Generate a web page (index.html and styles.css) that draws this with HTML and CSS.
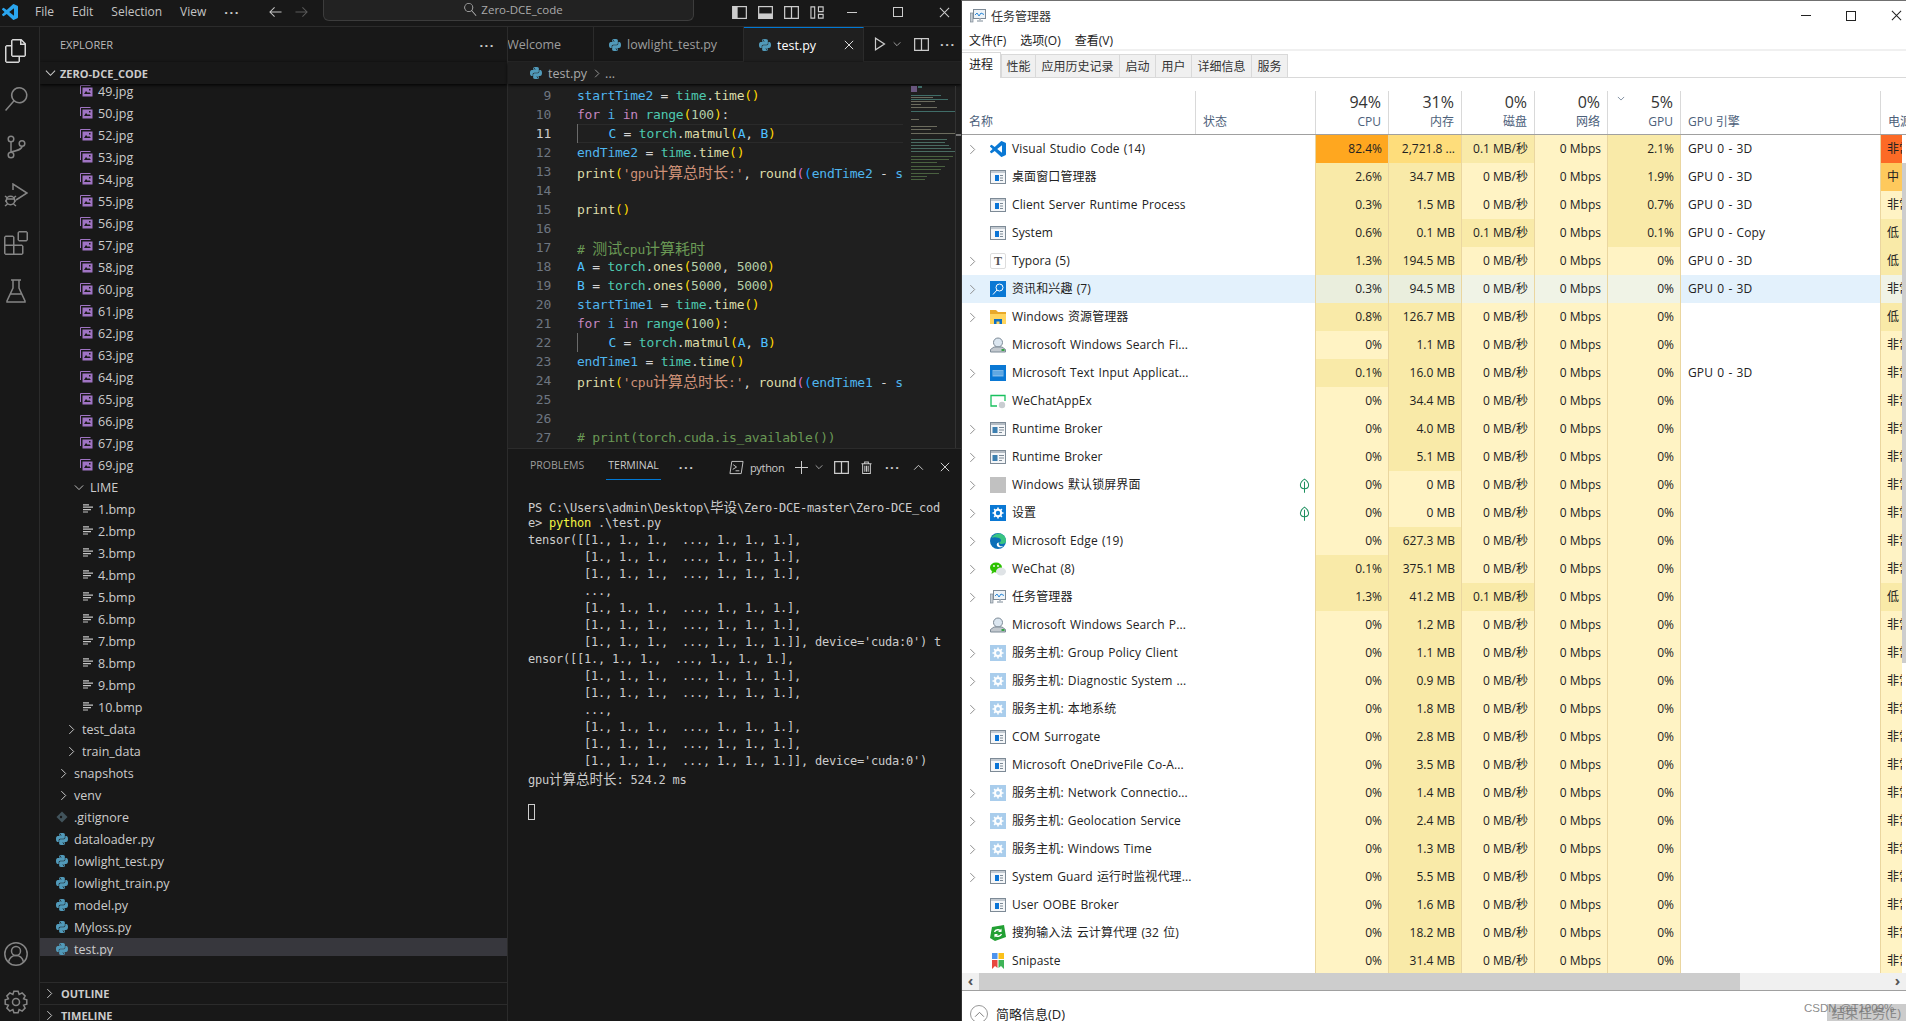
FILE: index.html
```html
<!DOCTYPE html>
<html lang="zh-CN">
<head>
    <meta charset="UTF-8">
    <title>Zero-DCE_code</title>
    <link rel="stylesheet" href="styles.css">
</head>
<body>
    <svg class="sprite" width="0" height="0">
        <symbol id="i-vscode" viewBox="0 0 24 24"><path fill="currentColor" d="M23.15 2.587L18.21.21a1.494 1.494 0 0 0-1.705.29l-9.46 8.63-4.12-3.128a.999.999 0 0 0-1.276.057L.327 7.261A1 1 0 0 0 .326 8.74L3.899 12 .326 15.26a1 1 0 0 0 .001 1.479L1.65 17.94a.999.999 0 0 0 1.276.057l4.12-3.128 9.46 8.63a1.492 1.492 0 0 0 1.704.29l4.942-2.377A1.5 1.5 0 0 0 24 20.06V3.939a1.5 1.5 0 0 0-.85-1.352zm-5.146 14.861L10.826 12l7.178-5.448v10.896z"/></symbol>
        <symbol id="i-python" viewBox="0 0 24 24"><path fill="#519aba" fill-rule="evenodd" d="M11.9 0C5.8 0 6.2 2.6 6.2 2.6v2.7H12v.8H3.9S0 5.7 0 11.9s3.4 6 3.4 6h2v-2.9s-.1-3.4 3.4-3.4h5.7s3.2.1 3.2-3.1V3.2S18.8 0 11.9 0zM8.7 1.9a1 1 0 1 1 0 2.1 1 1 0 0 1 0-2.1zM12.1 24c6.1 0 5.7-2.6 5.7-2.6v-2.7H12v-.8h8.1s3.9.4 3.9-5.8-3.4-6-3.4-6h-2v2.9s.1 3.4-3.4 3.4H9.5s-3.2-.1-3.2 3.1v5.3S5.2 24 12.1 24zm3.2-1.9a1 1 0 1 1 0-2.1 1 1 0 0 1 0 2.1z"/></symbol>
        <symbol id="i-image" viewBox="0 0 13 12"><path fill="none" stroke="#a074c4" d="M.5 9V.5h10"/><rect x="2.5" y="2.5" width="10" height="9" fill="#a074c4"/><path fill="#1a1a1a" d="M4 9l2-3 2 2 1-1 2 2zM9 4h1.5v1.5H9z"/></symbol>
        <symbol id="i-bmp" viewBox="0 0 10 10"><path stroke="#c5c5c5" stroke-width="1.2" d="M0 .8h6M0 3.2h10M0 5.6h8M0 8h5"/></symbol>
        <symbol id="i-git" viewBox="0 0 12 12"><path fill="#41535b" d="M6 .5L11.5 6 6 11.5.5 6z"/><circle cx="5" cy="6" r="1.2" fill="#181818"/></symbol>
        <symbol id="i-chev-r" viewBox="0 0 8 12"><path fill="none" stroke="currentColor" stroke-width="1.1" d="M1.5 1l5 5-5 5"/></symbol>
        <symbol id="i-chev-d" viewBox="0 0 12 8"><path fill="none" stroke="currentColor" stroke-width="1.1" d="M1 1.5l5 5 5-5"/></symbol>
        <symbol id="i-arrow" viewBox="0 0 14 12"><path fill="none" stroke="currentColor" stroke-width="1.1" d="M13.5 6H1M6 1L1 6l5 5"/></symbol>
        <symbol id="i-files" viewBox="0 0 24 24"><path fill="currentColor" d="M17.5 0h-9L7 1.5V6H2.5L1 7.5v15.07L2.5 24h12.07L16 22.57V18h4.7l1.3-1.43V4.5L17.5 0zm0 2.12l2.38 2.38H17.5V2.12zm-3 20.38h-12v-15H7v9.07L8.5 18h6v4.5zm6-6h-12v-15H16V6h4.5v10.5z"/></symbol>
        <symbol id="i-search" viewBox="0 0 24 24"><path fill="currentColor" d="M15.25 0a8.25 8.25 0 0 0-6.18 13.72L1 22.88l1.12 1 8.05-9.12A8.251 8.251 0 1 0 15.25.01V0zm0 15a6.75 6.75 0 1 1 0-13.5 6.75 6.75 0 0 1 0 13.5z"/></symbol>
        <symbol id="i-scm" viewBox="0 0 24 24"><g fill="none" stroke="currentColor" stroke-width="1.5"><circle cx="7" cy="4" r="2.8"/><circle cx="7" cy="20" r="2.8"/><circle cx="18" cy="8.5" r="2.8"/><path d="M7 7v10M18 11.3c0 3-4 4.2-11 5.7"/></g></symbol>
        <symbol id="i-debug" viewBox="0 0 24 24"><g fill="none" stroke="currentColor" stroke-width="1.5"><path d="M9 7V1l14 9-11 7"/><circle cx="6.5" cy="17.5" r="4.2"/><path d="M1 13l2.5 2M1 18h1.5M1 23l2.5-2M12 13l-2.5 2M12 18h-1.5M12 23l-2.5-2M3 16h7"/></g></symbol>
        <symbol id="i-ext" viewBox="0 0 24 24"><path fill="currentColor" d="M13.5 1.5L15 0h7.5L24 1.5V9l-1.5 1.5H15L13.5 9V1.5zm1.5 0V9h7.5V1.5H15zM0 15V6l1.5-1.5H9L10.5 6v7.5H18l1.5 1.5v7.5L18 24H1.5L0 22.5V15zm9-1.5V6H1.5v7.5H9zM9 15H1.5v7.5H9V15zm1.5 7.5H18V15h-7.5v7.5z"/></symbol>
        <symbol id="i-flask" viewBox="0 0 24 24"><path fill="none" stroke="currentColor" stroke-width="1.5" d="M7 1h10M9 1v8L3 22v1h18v-1L15 9V1M6.5 15h11"/></symbol>
        <symbol id="i-account" viewBox="0 0 24 24"><g fill="none" stroke="currentColor" stroke-width="1.5"><circle cx="12" cy="12" r="11.2"/><circle cx="12" cy="9" r="4.5"/><path d="M4.5 20c1-4 4-6.5 7.5-6.5s6.5 2.5 7.5 6.5"/></g></symbol>
        <symbol id="i-gear" viewBox="0 0 24 24"><g fill="none" stroke="currentColor" stroke-width="1.5"><polygon points="22.8,9.9 22.8,14.1 19.58,15.14 21.12,18.15 18.15,21.12 15.14,19.58 14.1,22.8 9.9,22.8 8.86,19.58 5.85,21.12 2.88,18.15 4.42,15.14 1.2,14.1 1.2,9.9 4.42,8.86 2.88,5.85 5.85,2.88 8.86,4.42 9.9,1.2 14.1,1.2 15.14,4.42 18.15,2.88 21.12,5.85 19.58,8.86"/><circle cx="12" cy="12" r="3.5"/></g></symbol>
        <symbol id="i-panel-left" viewBox="0 0 16 16"><rect x=".7" y="1.7" width="14.6" height="12.6" fill="none" stroke="currentColor" stroke-width="1.3"/><rect x="1" y="2" width="5" height="12" fill="currentColor"/></symbol>
        <symbol id="i-panel-bottom" viewBox="0 0 16 16"><rect x=".7" y="1.7" width="14.6" height="12.6" fill="none" stroke="currentColor" stroke-width="1.3"/><rect x="1" y="9" width="14" height="5" fill="currentColor"/></symbol>
        <symbol id="i-split" viewBox="0 0 16 16"><path fill="none" stroke="currentColor" stroke-width="1.3" d="M.7 1.7h14.6v12.6H.7zM8 1.7v12.6"/></symbol>
        <symbol id="i-layout" viewBox="0 0 16 16"><path fill="none" stroke="currentColor" stroke-width="1.2" d="M1 2h4v12H1zM9 2h5v5H9zM9 10h5v4H9z"/></symbol>
        <symbol id="i-close" viewBox="0 0 12 12"><path fill="none" stroke="currentColor" stroke-width="1.1" d="M1 1l10 10M11 1L1 11"/></symbol>
        <symbol id="i-run" viewBox="0 0 12 14"><path fill="none" stroke="currentColor" stroke-width="1.2" d="M1.5 1.2v11.6L10.5 7z"/></symbol>
        <symbol id="i-terminal" viewBox="0 0 16 16"><path fill="none" stroke="currentColor" d="M3 1.5h12L13 14.5H1zM4.5 5L8 7.5 4 10M7 11.5h4"/></symbol>
        <symbol id="i-trash" viewBox="0 0 12 14"><path fill="none" stroke="currentColor" stroke-width="1.1" d="M.5 3h11M4 3V1h4v2M1.8 3v10.5h8.4V3M4.2 5v6.5M6 5v6.5M7.8 5v6.5"/></symbol>
        <symbol id="p-app" viewBox="0 0 16 16"><rect x=".5" y="1.5" width="15" height="13" fill="#f4f6f8" stroke="#7d8a96"/><rect x="1" y="2" width="14" height="2" fill="#c3cad1"/><rect x="5" y="6" width="4" height="6" fill="#0a74d6"/><path stroke="#7d8a96" d="M10 6.5h3M10 9h3M10 11.5h3"/></symbol>
        <symbol id="p-broker" viewBox="0 0 16 16"><rect x=".5" y="1.5" width="15" height="13" fill="#f4f6f8" stroke="#7d8a96"/><rect x="1" y="2" width="14" height="2" fill="#b4bcc4"/><rect x="2.5" y="6" width="5" height="6" fill="#3c7fb0"/><path stroke="#7d8a96" d="M9 6.5h5M9 9h5M9 11.5h3"/></symbol>
        <symbol id="p-news" viewBox="0 0 16 16"><rect width="16" height="16" fill="#0a78d4"/><circle cx="9.5" cy="6.5" r="3.5" fill="none" stroke="#fff"/><path stroke="#fff" d="M7 9l-4 4.5"/></symbol>
        <symbol id="p-folder" viewBox="0 0 16 16"><path fill="#e8a92a" d="M0 1h6l2 2h8v12H0z"/><path fill="#ffd55e" d="M0 5h16v10H0z"/><path fill="#0d6fc4" d="M4 10h8v5H9.5v-2.5h-3V15H4z"/></symbol>
        <symbol id="p-indexer" viewBox="0 0 16 16"><circle cx="8" cy="5.5" r="4.5" fill="#dbe6f0" stroke="#7d8a96"/><path fill="#c2c8ce" stroke="#7d8a96" d="M.5 15v-2.5L4 10h8l3.5 2.5V15z"/><rect x="11.5" y="12" width="3" height="2" fill="#37a345"/></symbol>
        <symbol id="p-input" viewBox="0 0 16 16"><rect width="16" height="16" fill="#0a78d4"/><rect x="2.5" y="5" width="11" height="6.5" fill="#7db8e8"/><path stroke="#0a78d4" stroke-dasharray="1 1" d="M3.5 7h9M3.5 9h9"/></symbol>
        <symbol id="p-wxapp" viewBox="0 0 16 16"><path fill="none" stroke="#19c15f" stroke-width="1.3" d="M7 13H1V2.5h14V8"/><circle cx="12" cy="12" r="3.2" fill="#c9cdd1"/></symbol>
        <symbol id="p-gray" viewBox="0 0 16 16"><rect width="16" height="16" fill="#c1c1c1"/></symbol>
        <symbol id="p-settings" viewBox="0 0 16 16"><rect width="16" height="16" fill="#0a78d4"/><circle cx="8" cy="8" r="3.2" fill="none" stroke="#fff" stroke-width="2"/><path stroke="#fff" stroke-width="1.6" d="M8 2.5v2M8 11.5v2M2.5 8h2M11.5 8h2M4.1 4.1l1.4 1.4M10.5 10.5l1.4 1.4M11.9 4.1l-1.4 1.4M5.5 10.5l-1.4 1.4"/></symbol>
        <symbol id="p-edge" viewBox="0 0 16 16"><circle cx="8" cy="8" r="8" fill="#0b6fb8"/><path fill="#39c481" d="M1.5 5C3 1.5 7 0 10 .5c3.5.8 6 3.6 6 7.5 0 2-2 3-4 3-1.5 0-3-.6-3-1.5 2-.5 2.5-2.5 1.5-3.500C9 4.5 4 3.5 1.5 5z"/><path fill="#fff" d="M9 9.5c-2.5.2-3 3-1 4.3 1.5.9 4 .7 5.5-.8-2 .7-3.800.3-4.500-1-.5-.8-.5-1.600 0-2.500z"/></symbol>
        <symbol id="p-wechat" viewBox="0 0 16 16"><ellipse cx="6" cy="6.5" rx="6" ry="5" fill="#2dc100"/><path fill="#2dc100" d="M2 10l-.5 3 3-2z"/><ellipse cx="11" cy="10.5" rx="5" ry="4" fill="#dfe3e6"/><circle cx="4" cy="5" r=".9" fill="#fff"/><circle cx="8" cy="5" r=".9" fill="#fff"/></symbol>
        <symbol id="p-taskmgr" viewBox="0 0 16 16"><rect x="3.5" y="1.5" width="12" height="9" fill="#eef3f7" stroke="#7d8a96"/><path fill="none" stroke="#2b88d8" d="M5 7l2-2 2 3 2-3 3 1.5"/><path stroke="#7d8a96" d="M7 13h6"/><rect x="9" y="10.5" width="2" height="2.5" fill="#b8c0c8"/><rect x=".5" y="5" width="2.5" height="9" fill="#c8ced4" stroke="#7d8a96" stroke-width=".7"/></symbol>
        <symbol id="p-service" viewBox="0 0 16 16"><rect width="16" height="16" fill="#a9cdec"/><circle cx="8" cy="8" r="3" fill="none" stroke="#fff" stroke-width="2"/><path stroke="#fff" stroke-width="1.6" d="M8 2.5v2M8 11.5v2M2.5 8h2M11.5 8h2M4.1 4.1l1.4 1.4M10.5 10.5l1.4 1.4M11.9 4.1l-1.4 1.4M5.5 10.5l-1.4 1.4"/></symbol>
        <symbol id="p-sogou" viewBox="0 0 16 16"><path fill="#22a033" d="M2 2l12-2 2 12-11 4-5-3z"/><path fill="none" stroke="#fff" stroke-width="1.4" d="M4.5 7c1-2.5 5-3 6.5-1M11.5 9c-1 2.5-5 3-6.5 1"/><path fill="#fff" d="M11.5 3.5V7H8zM4.5 12.5V9H8z"/></symbol>
        <symbol id="p-snipaste" viewBox="0 0 16 16"><rect x="2" width="5.5" height="6" fill="#4d93ee"/><rect x="8.5" width="5.5" height="6" fill="#fbc11b"/><path fill="#e8483f" d="M2 7h5.5v8L5 13l-3 3z"/><path fill="#3fb457" d="M8.5 7H14v9l-3-3-2.5 2z"/></symbol>
        <symbol id="p-leaf" viewBox="0 0 12 16"><path fill="none" stroke="#1c8f5e" stroke-width="1.1" d="M6 1C3 3 1.5 5 1.5 7.5 1.5 10 3.5 11.5 6 11.5s4.5-1.5 4.5-4C10.5 5 9 3 6 1zM6 4v12"/></symbol>
    </svg>

    <div class="vscode">
        <div class="titlebar">
            <svg class="logo"><use href="#i-vscode"/></svg>
            <div class="menubar"><span>File</span><span>Edit</span><span>Selection</span><span>View</span><span class="more">···</span></div>
            <div class="nav-arrows">
                <svg class="nav-arrow"><use href="#i-arrow"/></svg>
                <svg class="nav-arrow next"><use href="#i-arrow"/></svg>
            </div>
            <div class="command-center"><svg class="ico-13"><use href="#i-search"/></svg>Zero-DCE_code</div>
            <div class="layout-btns">
                <svg class="ico-15"><use href="#i-panel-left"/></svg>
                <svg class="ico-15"><use href="#i-panel-bottom"/></svg>
                <svg class="ico-15"><use href="#i-split"/></svg>
                <svg class="ico-15"><use href="#i-layout"/></svg>
            </div>
            <div class="win-btns">
                <span class="win-min"></span>
                <span class="win-max"></span>
                <svg class="ico-11"><use href="#i-close"/></svg>
            </div>
        </div>
        <div class="workbench">
            <div class="activitybar">
                <svg class="act active"><use href="#i-files"/></svg>
                <svg class="act"><use href="#i-search"/></svg>
                <svg class="act"><use href="#i-scm"/></svg>
                <svg class="act"><use href="#i-debug"/></svg>
                <svg class="act"><use href="#i-ext"/></svg>
                <svg class="act"><use href="#i-flask"/></svg>
                <div class="act-spacer"></div>
                <svg class="act"><use href="#i-account"/></svg>
                <svg class="act"><use href="#i-gear"/></svg>
            </div>
            <div class="sidebar">
                <div class="side-title"><span>EXPLORER</span><span class="more">···</span></div>
                <div class="folder-head"><svg class="chev-d"><use href="#i-chev-d"/></svg>ZERO-DCE_CODE</div>
                <div class="tree">
                    <div class="tree-row lvl3"><svg class="t-img"><use href="#i-image"/></svg>49.jpg</div>
                    <div class="tree-row lvl3"><svg class="t-img"><use href="#i-image"/></svg>50.jpg</div>
                    <div class="tree-row lvl3"><svg class="t-img"><use href="#i-image"/></svg>52.jpg</div>
                    <div class="tree-row lvl3"><svg class="t-img"><use href="#i-image"/></svg>53.jpg</div>
                    <div class="tree-row lvl3"><svg class="t-img"><use href="#i-image"/></svg>54.jpg</div>
                    <div class="tree-row lvl3"><svg class="t-img"><use href="#i-image"/></svg>55.jpg</div>
                    <div class="tree-row lvl3"><svg class="t-img"><use href="#i-image"/></svg>56.jpg</div>
                    <div class="tree-row lvl3"><svg class="t-img"><use href="#i-image"/></svg>57.jpg</div>
                    <div class="tree-row lvl3"><svg class="t-img"><use href="#i-image"/></svg>58.jpg</div>
                    <div class="tree-row lvl3"><svg class="t-img"><use href="#i-image"/></svg>60.jpg</div>
                    <div class="tree-row lvl3"><svg class="t-img"><use href="#i-image"/></svg>61.jpg</div>
                    <div class="tree-row lvl3"><svg class="t-img"><use href="#i-image"/></svg>62.jpg</div>
                    <div class="tree-row lvl3"><svg class="t-img"><use href="#i-image"/></svg>63.jpg</div>
                    <div class="tree-row lvl3"><svg class="t-img"><use href="#i-image"/></svg>64.jpg</div>
                    <div class="tree-row lvl3"><svg class="t-img"><use href="#i-image"/></svg>65.jpg</div>
                    <div class="tree-row lvl3"><svg class="t-img"><use href="#i-image"/></svg>66.jpg</div>
                    <div class="tree-row lvl3"><svg class="t-img"><use href="#i-image"/></svg>67.jpg</div>
                    <div class="tree-row lvl3"><svg class="t-img"><use href="#i-image"/></svg>69.jpg</div>
                    <div class="tree-row lvl-lime"><svg class="t-chev-d"><use href="#i-chev-d"/></svg>LIME</div>
                    <div class="tree-row lvl3"><svg class="t-bmp"><use href="#i-bmp"/></svg>1.bmp</div>
                    <div class="tree-row lvl3"><svg class="t-bmp"><use href="#i-bmp"/></svg>2.bmp</div>
                    <div class="tree-row lvl3"><svg class="t-bmp"><use href="#i-bmp"/></svg>3.bmp</div>
                    <div class="tree-row lvl3"><svg class="t-bmp"><use href="#i-bmp"/></svg>4.bmp</div>
                    <div class="tree-row lvl3"><svg class="t-bmp"><use href="#i-bmp"/></svg>5.bmp</div>
                    <div class="tree-row lvl3"><svg class="t-bmp"><use href="#i-bmp"/></svg>6.bmp</div>
                    <div class="tree-row lvl3"><svg class="t-bmp"><use href="#i-bmp"/></svg>7.bmp</div>
                    <div class="tree-row lvl3"><svg class="t-bmp"><use href="#i-bmp"/></svg>8.bmp</div>
                    <div class="tree-row lvl3"><svg class="t-bmp"><use href="#i-bmp"/></svg>9.bmp</div>
                    <div class="tree-row lvl3"><svg class="t-bmp"><use href="#i-bmp"/></svg>10.bmp</div>
                    <div class="tree-row lvl2"><svg class="t-chev"><use href="#i-chev-r"/></svg>test_data</div>
                    <div class="tree-row lvl2"><svg class="t-chev"><use href="#i-chev-r"/></svg>train_data</div>
                    <div class="tree-row lvl1"><svg class="t-chev"><use href="#i-chev-r"/></svg>snapshots</div>
                    <div class="tree-row lvl1"><svg class="t-chev"><use href="#i-chev-r"/></svg>venv</div>
                    <div class="tree-row lvl1"><svg class="t-file"><use href="#i-git"/></svg>.gitignore</div>
                    <div class="tree-row lvl1"><svg class="t-file"><use href="#i-python"/></svg>dataloader.py</div>
                    <div class="tree-row lvl1"><svg class="t-file"><use href="#i-python"/></svg>lowlight_test.py</div>
                    <div class="tree-row lvl1"><svg class="t-file"><use href="#i-python"/></svg>lowlight_train.py</div>
                    <div class="tree-row lvl1"><svg class="t-file"><use href="#i-python"/></svg>model.py</div>
                    <div class="tree-row lvl1"><svg class="t-file"><use href="#i-python"/></svg>Myloss.py</div>
                    <div class="tree-row lvl1 selected"><svg class="t-file"><use href="#i-python"/></svg>test.py</div>
                </div>
                <div class="side-section"><svg class="t-chev"><use href="#i-chev-r"/></svg>OUTLINE</div>
                <div class="side-section"><svg class="t-chev"><use href="#i-chev-r"/></svg>TIMELINE</div>
            </div>
            <div class="main">
                <div class="tabbar">
                    <div class="tab tab-welcome">Welcome</div>
                    <div class="tab tab-lowlight"><svg class="t-file"><use href="#i-python"/></svg>lowlight_test.py</div>
                    <div class="tab tab-active"><svg class="t-file"><use href="#i-python"/></svg>test.py<svg class="ico-10 tab-close"><use href="#i-close"/></svg></div>
                    <div class="tab-actions">
                        <svg class="ico-run"><use href="#i-run"/></svg>
                        <svg class="ico-chev"><use href="#i-chev-d"/></svg>
                        <svg class="ico-15"><use href="#i-split"/></svg>
                        <span class="more">···</span>
                    </div>
                </div>
                <div class="breadcrumb"><svg class="t-file"><use href="#i-python"/></svg>test.py<svg class="crumb-chev"><use href="#i-chev-r"/></svg>...</div>
                <div class="editor">
                    <div class="gutter">
                        <div>9</div><div>10</div><div class="cur">11</div><div>12</div><div>13</div><div>14</div><div>15</div><div>16</div><div>17</div><div>18</div><div>19</div><div>20</div><div>21</div><div>22</div><div>23</div><div>24</div><div>25</div><div>26</div><div>27</div>
                    </div>
                    <div class="code">
                        <div class="ln"><i class="v">startTime2</i> = <i class="c">time</i>.<i class="f">time</i><i class="b1">()</i></div>
                        <div class="ln"><i class="k">for</i> <i class="v">i</i> <i class="k">in</i> <i class="c">range</i><i class="b1">(</i><i class="n">100</i><i class="b1">)</i>:</div>
                        <div class="ln cur-line guide">    <i class="u">C</i> = <i class="c">torch</i>.<i class="f">matmul</i><i class="b1">(</i><i class="u">A</i>, <i class="u">B</i><i class="b1">)</i></div>
                        <div class="ln"><i class="v">endTime2</i> = <i class="c">time</i>.<i class="f">time</i><i class="b1">()</i></div>
                        <div class="ln"><i class="f">print</i><i class="b1">(</i><i class="s">'gpu<b>计算总时长</b>:'</i>, <i class="f">round</i><i class="b2">(</i><i class="b3">(</i><i class="v">endTime2</i> - <i class="v">startTime2</i><i class="b3">)</i> * <i class="n">10</i><i class="b2">)</i></div>
                        <div class="ln"></div>
                        <div class="ln"><i class="f">print</i><i class="b1">()</i></div>
                        <div class="ln"></div>
                        <div class="ln"><i class="m"># <b>测试</b>cpu<b>计算耗时</b></i></div>
                        <div class="ln"><i class="u">A</i> = <i class="c">torch</i>.<i class="f">ones</i><i class="b1">(</i><i class="n">5000</i>, <i class="n">5000</i><i class="b1">)</i></div>
                        <div class="ln"><i class="u">B</i> = <i class="c">torch</i>.<i class="f">ones</i><i class="b1">(</i><i class="n">5000</i>, <i class="n">5000</i><i class="b1">)</i></div>
                        <div class="ln"><i class="v">startTime1</i> = <i class="c">time</i>.<i class="f">time</i><i class="b1">()</i></div>
                        <div class="ln"><i class="k">for</i> <i class="v">i</i> <i class="k">in</i> <i class="c">range</i><i class="b1">(</i><i class="n">100</i><i class="b1">)</i>:</div>
                        <div class="ln guide">    <i class="u">C</i> = <i class="c">torch</i>.<i class="f">matmul</i><i class="b1">(</i><i class="u">A</i>, <i class="u">B</i><i class="b1">)</i></div>
                        <div class="ln"><i class="v">endTime1</i> = <i class="c">time</i>.<i class="f">time</i><i class="b1">()</i></div>
                        <div class="ln"><i class="f">print</i><i class="b1">(</i><i class="s">'cpu<b>计算总时长</b>:'</i>, <i class="f">round</i><i class="b2">(</i><i class="b3">(</i><i class="v">endTime1</i> - <i class="v">startTime1</i><i class="b3">)</i> * <i class="n">10</i><i class="b2">)</i></div>
                        <div class="ln"></div>
                        <div class="ln"></div>
                        <div class="ln"><i class="m"># print(torch.cuda.is_available())</i></div>
                    </div>
                    <svg class="minimap" viewBox="0 0 44 96" width="44" height="96">
                        <g fill="#8a6fa8"><rect x="0" y="0" width="6" height="6"/></g>
                        <g fill="#4e8f88"><rect x="7" y="0" width="4" height="2"/><rect x="0" y="9" width="30" height="1"/><rect x="0" y="13" width="37" height="1"/><rect x="0" y="25" width="44" height="1"/></g>
                        <g fill="#8d8d7a"><rect x="0" y="11" width="22" height="1"/><rect x="0" y="15" width="24" height="1"/><rect x="0" y="18" width="10" height="1"/><rect x="0" y="21" width="26" height="1"/><rect x="0" y="33" width="8" height="1"/><rect x="0" y="40" width="26" height="1"/><rect x="0" y="43" width="20" height="1"/><rect x="0" y="47" width="44" height="1"/></g>
                        <g fill="#5b8c7e"><rect x="0" y="53" width="36" height="1"/><rect x="0" y="56" width="34" height="1"/><rect x="0" y="59" width="38" height="1"/><rect x="0" y="62" width="40" height="1"/><rect x="0" y="65" width="44" height="1"/></g>
                        <g fill="#5d7d4f"><rect x="0" y="70" width="42" height="1"/><rect x="0" y="73" width="38" height="1"/><rect x="0" y="76" width="26" height="1"/><rect x="0" y="80" width="34" height="1"/><rect x="0" y="83" width="30" height="1"/><rect x="0" y="87" width="28" height="1"/><rect x="0" y="90" width="16" height="1"/><rect x="0" y="93" width="14" height="1"/></g>
                    </svg>
                    <div class="editor-scroll"><span class="scroll-mark"></span></div>
                </div>
                <div class="panel">
                    <div class="panel-head">
                        <span class="panel-tab">PROBLEMS</span>
                        <span class="panel-tab on">TERMINAL</span>
                        <span class="more">···</span>
                        <div class="panel-actions">
                            <svg class="ico-15"><use href="#i-terminal"/></svg>
                            <span class="term-name">python</span>
                            <span class="term-plus"></span>
                            <svg class="ico-chev"><use href="#i-chev-d"/></svg>
                            <svg class="ico-15"><use href="#i-split"/></svg>
                            <svg class="ico-trash"><use href="#i-trash"/></svg>
                            <span class="more">···</span>
                            <svg class="ico-up"><use href="#i-chev-d"/></svg>
                            <svg class="ico-10"><use href="#i-close"/></svg>
                        </div>
                    </div>
                    <div class="terminal">
                        <div>PS C:\Users\admin\Desktop\<b>毕设</b>\Zero-DCE-master\Zero-DCE_cod</div>
                        <div>e&gt; <span class="py">python</span> .\test.py</div>
                        <div>tensor([[1., 1., 1.,  ..., 1., 1., 1.],</div>
                        <div>        [1., 1., 1.,  ..., 1., 1., 1.],</div>
                        <div>        [1., 1., 1.,  ..., 1., 1., 1.],</div>
                        <div>        ...,</div>
                        <div>        [1., 1., 1.,  ..., 1., 1., 1.],</div>
                        <div>        [1., 1., 1.,  ..., 1., 1., 1.],</div>
                        <div>        [1., 1., 1.,  ..., 1., 1., 1.]], device='cuda:0') t</div>
                        <div>ensor([[1., 1., 1.,  ..., 1., 1., 1.],</div>
                        <div>        [1., 1., 1.,  ..., 1., 1., 1.],</div>
                        <div>        [1., 1., 1.,  ..., 1., 1., 1.],</div>
                        <div>        ...,</div>
                        <div>        [1., 1., 1.,  ..., 1., 1., 1.],</div>
                        <div>        [1., 1., 1.,  ..., 1., 1., 1.],</div>
                        <div>        [1., 1., 1.,  ..., 1., 1., 1.]], device='cuda:0')</div>
                        <div>gpu<b>计算总时长</b>: 524.2 ms</div>
                        <div>&nbsp;</div>
                        <div class="term-cursor"></div>
                    </div>
                </div>
            </div>
        </div>
    </div>

    <div class="taskmgr">
        <div class="tm-title">
            <svg class="p-ico"><use href="#p-taskmgr"/></svg>
            <span class="tm-name">任务管理器</span>
            <div class="tm-win"><span class="tm-min"></span><span class="tm-max"></span><svg class="ico-11"><use href="#i-close"/></svg></div>
        </div>
        <div class="tm-menu"><span>文件(F)</span><span>选项(O)</span><span>查看(V)</span></div>
        <div class="tm-tabs">
            <span class="tm-tab on">进程</span><span class="tm-tab">性能</span><span class="tm-tab">应用历史记录</span><span class="tm-tab">启动</span><span class="tm-tab">用户</span><span class="tm-tab">详细信息</span><span class="tm-tab">服务</span>
        </div>
        <div class="tm-head">
            <div class="th left">名称</div>
            <div class="th left">状态</div>
            <div class="th"><strong>94%</strong>CPU</div>
            <div class="th"><strong>31%</strong>内存</div>
            <div class="th"><strong>0%</strong>磁盘</div>
            <div class="th"><strong>0%</strong>网络</div>
            <div class="th"><svg class="sort-chev"><use href="#i-chev-d"/></svg><strong>5%</strong>GPU</div>
            <div class="th left">GPU 引擎</div>
            <div class="th left">电源</div>
        </div>
        <div class="tm-body">
            <div class="proc-list">
                <div class="proc"><div class="name"><svg class="exp"><use href="#i-chev-r"/></svg><svg class="p-ico vs"><use href="#i-vscode"/></svg>Visual Studio Code (14)</div><div></div><div class="h o">82.4%</div><div class="h y">2,721.8 ...</div><div class="h m">0.1 MB/秒</div><div class="h">0 Mbps</div><div class="h m">2.1%</div><div class="eng">GPU 0 - 3D</div><div class="pw r">非常高</div></div>
                <div class="proc"><div class="name no-exp"><svg class="p-ico"><use href="#p-app"/></svg>桌面窗口管理器</div><div></div><div class="h m">2.6%</div><div class="h m">34.7 MB</div><div class="h">0 MB/秒</div><div class="h">0 Mbps</div><div class="h m">1.9%</div><div class="eng">GPU 0 - 3D</div><div class="pw y">中</div></div>
                <div class="proc"><div class="name no-exp"><svg class="p-ico"><use href="#p-app"/></svg>Client Server Runtime Process</div><div></div><div class="h m">0.3%</div><div class="h m">1.5 MB</div><div class="h">0 MB/秒</div><div class="h">0 Mbps</div><div class="h m">0.7%</div><div class="eng">GPU 0 - 3D</div><div class="pw">非常低</div></div>
                <div class="proc"><div class="name no-exp"><svg class="p-ico"><use href="#p-app"/></svg>System</div><div></div><div class="h m">0.6%</div><div class="h m">0.1 MB</div><div class="h m">0.1 MB/秒</div><div class="h">0 Mbps</div><div class="h m">0.1%</div><div class="eng">GPU 0 - Copy</div><div class="pw m">低</div></div>
                <div class="proc"><div class="name"><svg class="exp"><use href="#i-chev-r"/></svg><span class="typora">T</span>Typora (5)</div><div></div><div class="h m">1.3%</div><div class="h m">194.5 MB</div><div class="h">0 MB/秒</div><div class="h">0 Mbps</div><div class="h">0%</div><div class="eng">GPU 0 - 3D</div><div class="pw m">低</div></div>
                <div class="proc hover"><div class="name"><svg class="exp"><use href="#i-chev-r"/></svg><svg class="p-ico"><use href="#p-news"/></svg>资讯和兴趣 (7)</div><div></div><div class="h m">0.3%</div><div class="h m">94.5 MB</div><div class="h">0 MB/秒</div><div class="h">0 Mbps</div><div class="h">0%</div><div class="eng">GPU 0 - 3D</div><div class="pw">非常低</div></div>
                <div class="proc"><div class="name"><svg class="exp"><use href="#i-chev-r"/></svg><svg class="p-ico"><use href="#p-folder"/></svg>Windows 资源管理器</div><div></div><div class="h m">0.8%</div><div class="h m">126.7 MB</div><div class="h">0 MB/秒</div><div class="h">0 Mbps</div><div class="h">0%</div><div class="eng"></div><div class="pw m">低</div></div>
                <div class="proc"><div class="name no-exp"><svg class="p-ico"><use href="#p-indexer"/></svg>Microsoft Windows Search Fi...</div><div></div><div class="h">0%</div><div class="h m">1.1 MB</div><div class="h">0 MB/秒</div><div class="h">0 Mbps</div><div class="h">0%</div><div class="eng"></div><div class="pw">非常低</div></div>
                <div class="proc"><div class="name"><svg class="exp"><use href="#i-chev-r"/></svg><svg class="p-ico"><use href="#p-input"/></svg>Microsoft Text Input Applicat...</div><div></div><div class="h m">0.1%</div><div class="h m">16.0 MB</div><div class="h">0 MB/秒</div><div class="h">0 Mbps</div><div class="h">0%</div><div class="eng">GPU 0 - 3D</div><div class="pw">非常低</div></div>
                <div class="proc"><div class="name no-exp"><svg class="p-ico"><use href="#p-wxapp"/></svg>WeChatAppEx</div><div></div><div class="h">0%</div><div class="h m">34.4 MB</div><div class="h">0 MB/秒</div><div class="h">0 Mbps</div><div class="h">0%</div><div class="eng"></div><div class="pw">非常低</div></div>
                <div class="proc"><div class="name"><svg class="exp"><use href="#i-chev-r"/></svg><svg class="p-ico"><use href="#p-broker"/></svg>Runtime Broker</div><div></div><div class="h">0%</div><div class="h m">4.0 MB</div><div class="h">0 MB/秒</div><div class="h">0 Mbps</div><div class="h">0%</div><div class="eng"></div><div class="pw">非常低</div></div>
                <div class="proc"><div class="name"><svg class="exp"><use href="#i-chev-r"/></svg><svg class="p-ico"><use href="#p-broker"/></svg>Runtime Broker</div><div></div><div class="h">0%</div><div class="h m">5.1 MB</div><div class="h">0 MB/秒</div><div class="h">0 Mbps</div><div class="h">0%</div><div class="eng"></div><div class="pw">非常低</div></div>
                <div class="proc"><div class="name"><svg class="exp"><use href="#i-chev-r"/></svg><svg class="p-ico"><use href="#p-gray"/></svg>Windows 默认锁屏界面</div><div class="stat"><svg class="leaf"><use href="#p-leaf"/></svg></div><div class="h">0%</div><div class="h">0 MB</div><div class="h">0 MB/秒</div><div class="h">0 Mbps</div><div class="h">0%</div><div class="eng"></div><div class="pw">非常低</div></div>
                <div class="proc"><div class="name"><svg class="exp"><use href="#i-chev-r"/></svg><svg class="p-ico"><use href="#p-settings"/></svg>设置</div><div class="stat"><svg class="leaf"><use href="#p-leaf"/></svg></div><div class="h">0%</div><div class="h">0 MB</div><div class="h">0 MB/秒</div><div class="h">0 Mbps</div><div class="h">0%</div><div class="eng"></div><div class="pw">非常低</div></div>
                <div class="proc"><div class="name"><svg class="exp"><use href="#i-chev-r"/></svg><svg class="p-ico"><use href="#p-edge"/></svg>Microsoft Edge (19)</div><div></div><div class="h">0%</div><div class="h m">627.3 MB</div><div class="h">0 MB/秒</div><div class="h">0 Mbps</div><div class="h">0%</div><div class="eng"></div><div class="pw">非常低</div></div>
                <div class="proc"><div class="name"><svg class="exp"><use href="#i-chev-r"/></svg><svg class="p-ico"><use href="#p-wechat"/></svg>WeChat (8)</div><div></div><div class="h m">0.1%</div><div class="h m">375.1 MB</div><div class="h">0 MB/秒</div><div class="h">0 Mbps</div><div class="h">0%</div><div class="eng"></div><div class="pw">非常低</div></div>
                <div class="proc"><div class="name"><svg class="exp"><use href="#i-chev-r"/></svg><svg class="p-ico"><use href="#p-taskmgr"/></svg>任务管理器</div><div></div><div class="h m">1.3%</div><div class="h m">41.2 MB</div><div class="h m">0.1 MB/秒</div><div class="h">0 Mbps</div><div class="h">0%</div><div class="eng"></div><div class="pw m">低</div></div>
                <div class="proc"><div class="name no-exp"><svg class="p-ico"><use href="#p-indexer"/></svg>Microsoft Windows Search P...</div><div></div><div class="h">0%</div><div class="h m">1.2 MB</div><div class="h">0 MB/秒</div><div class="h">0 Mbps</div><div class="h">0%</div><div class="eng"></div><div class="pw">非常低</div></div>
                <div class="proc"><div class="name"><svg class="exp"><use href="#i-chev-r"/></svg><svg class="p-ico"><use href="#p-service"/></svg>服务主机: Group Policy Client</div><div></div><div class="h">0%</div><div class="h m">1.1 MB</div><div class="h">0 MB/秒</div><div class="h">0 Mbps</div><div class="h">0%</div><div class="eng"></div><div class="pw">非常低</div></div>
                <div class="proc"><div class="name"><svg class="exp"><use href="#i-chev-r"/></svg><svg class="p-ico"><use href="#p-service"/></svg>服务主机: Diagnostic System ...</div><div></div><div class="h">0%</div><div class="h m">0.9 MB</div><div class="h">0 MB/秒</div><div class="h">0 Mbps</div><div class="h">0%</div><div class="eng"></div><div class="pw">非常低</div></div>
                <div class="proc"><div class="name"><svg class="exp"><use href="#i-chev-r"/></svg><svg class="p-ico"><use href="#p-service"/></svg>服务主机: 本地系统</div><div></div><div class="h">0%</div><div class="h m">1.8 MB</div><div class="h">0 MB/秒</div><div class="h">0 Mbps</div><div class="h">0%</div><div class="eng"></div><div class="pw">非常低</div></div>
                <div class="proc"><div class="name no-exp"><svg class="p-ico"><use href="#p-app"/></svg>COM Surrogate</div><div></div><div class="h">0%</div><div class="h m">2.8 MB</div><div class="h">0 MB/秒</div><div class="h">0 Mbps</div><div class="h">0%</div><div class="eng"></div><div class="pw">非常低</div></div>
                <div class="proc"><div class="name no-exp"><svg class="p-ico"><use href="#p-app"/></svg>Microsoft OneDriveFile Co-A...</div><div></div><div class="h">0%</div><div class="h m">3.5 MB</div><div class="h">0 MB/秒</div><div class="h">0 Mbps</div><div class="h">0%</div><div class="eng"></div><div class="pw">非常低</div></div>
                <div class="proc"><div class="name"><svg class="exp"><use href="#i-chev-r"/></svg><svg class="p-ico"><use href="#p-service"/></svg>服务主机: Network Connectio...</div><div></div><div class="h">0%</div><div class="h m">1.4 MB</div><div class="h">0 MB/秒</div><div class="h">0 Mbps</div><div class="h">0%</div><div class="eng"></div><div class="pw">非常低</div></div>
                <div class="proc"><div class="name"><svg class="exp"><use href="#i-chev-r"/></svg><svg class="p-ico"><use href="#p-service"/></svg>服务主机: Geolocation Service</div><div></div><div class="h">0%</div><div class="h m">2.4 MB</div><div class="h">0 MB/秒</div><div class="h">0 Mbps</div><div class="h">0%</div><div class="eng"></div><div class="pw">非常低</div></div>
                <div class="proc"><div class="name"><svg class="exp"><use href="#i-chev-r"/></svg><svg class="p-ico"><use href="#p-service"/></svg>服务主机: Windows Time</div><div></div><div class="h">0%</div><div class="h m">1.3 MB</div><div class="h">0 MB/秒</div><div class="h">0 Mbps</div><div class="h">0%</div><div class="eng"></div><div class="pw">非常低</div></div>
                <div class="proc"><div class="name"><svg class="exp"><use href="#i-chev-r"/></svg><svg class="p-ico"><use href="#p-app"/></svg>System Guard 运行时监视代理...</div><div></div><div class="h">0%</div><div class="h m">5.5 MB</div><div class="h">0 MB/秒</div><div class="h">0 Mbps</div><div class="h">0%</div><div class="eng"></div><div class="pw">非常低</div></div>
                <div class="proc"><div class="name no-exp"><svg class="p-ico"><use href="#p-app"/></svg>User OOBE Broker</div><div></div><div class="h">0%</div><div class="h m">1.6 MB</div><div class="h">0 MB/秒</div><div class="h">0 Mbps</div><div class="h">0%</div><div class="eng"></div><div class="pw">非常低</div></div>
                <div class="proc"><div class="name no-exp"><svg class="p-ico"><use href="#p-sogou"/></svg>搜狗输入法 云计算代理 (32 位)</div><div></div><div class="h">0%</div><div class="h m">18.2 MB</div><div class="h">0 MB/秒</div><div class="h">0 Mbps</div><div class="h">0%</div><div class="eng"></div><div class="pw">非常低</div></div>
                <div class="proc"><div class="name no-exp"><svg class="p-ico"><use href="#p-snipaste"/></svg>Snipaste</div><div></div><div class="h">0%</div><div class="h m">31.4 MB</div><div class="h">0 MB/秒</div><div class="h">0 Mbps</div><div class="h">0%</div><div class="eng"></div><div class="pw">非常低</div></div>
            </div>
            <div class="v-scroll"><span class="v-thumb"></span></div>
        </div>
        <div class="h-scroll">
            <span class="h-btn">‹</span>
            <span class="h-thumb"></span>
            <span class="h-track"></span>
            <span class="h-btn">›</span>
        </div>
        <div class="tm-foot">
            <div class="less"><span class="less-ico"><svg class="ico-up"><use href="#i-chev-d"/></svg></span>简略信息(D)</div>
            <div class="end-task">结束任务(E)</div>
            <span class="watermark">CSDN @T1009%</span>
        </div>
    </div>
</body>
</html>
```

FILE: styles.css
```css
* {
    margin: 0;
    padding: 0;
    box-sizing: border-box;
}

body {
    display: flex;
    width: 1906px;
    height: 1021px;
    overflow: hidden;
    font-family: "Open Sans", "Noto Sans CJK SC", sans-serif;
    background: #181818;
}

.sprite {
    position: absolute;
}

/* vscode window */
.vscode {
    width: 961px;
    height: 1021px;
    display: flex;
    flex-direction: column;
    background: #181818;
    color: #ccc;
    font-size: 12.5px;
}

.titlebar {
    height: 27px;
    flex: none;
    display: flex;
    align-items: center;
    border-bottom: 1px solid #2b2b2b;
    color: #c4c4c4;
}

.logo {
    width: 16px;
    height: 16px;
    flex: none;
    margin: 0 0 2px 2px;
    color: #2aa5ee;
}

.menubar {
    width: 219px;
    flex: none;
    display: flex;
    gap: 18px;
    margin-left: 17px;
    margin-bottom: 2px;
    font-size: 12px;
}

.nav-arrows {
    display: flex;
    gap: 13px;
    margin-left: 15px;
    margin-bottom: 2px;
    color: #c4c4c4;
}

.nav-arrow {
    width: 13px;
    height: 12px;
}

.nav-arrow.next {
    color: #5a5a5a;
    transform: scaleX(-1);
}

.command-center {
    width: 371px;
    height: 21px;
    flex: none;
    margin: 0 0 6px 15px;
    display: flex;
    align-items: center;
    justify-content: center;
    gap: 4px;
    padding-left: 10px;
    border: 1px solid #3c3c3c;
    border-top: none;
    border-radius: 0 0 6px 6px;
    background: #222;
    font-size: 11.5px;
    color: #aaa;
}

.ico-13 { width: 13px; height: 13px; color: #bbb; transform: scaleX(-1); }
.ico-15 { width: 15px; height: 15px; color: #ccc; flex: none; }
.ico-11 { width: 11px; height: 11px; color: #ccc; flex: none; }
.ico-10 { width: 10px; height: 10px; color: #ddd; flex: none; }

.layout-btns {
    display: flex;
    gap: 11px;
    margin-left: 38px;
    margin-bottom: 2px;
}

.win-btns {
    display: flex;
    align-items: center;
    gap: 36px;
    margin-left: 22px;
    margin-bottom: 2px;
}

.win-min {
    width: 10px;
    height: 1px;
    background: #ccc;
}

.win-max {
    width: 10px;
    height: 10px;
    border: 1px solid #ccc;
}

.workbench {
    flex: 1;
    display: flex;
    min-height: 0;
}

.activitybar {
    width: 40px;
    flex: none;
    display: flex;
    flex-direction: column;
    align-items: center;
    gap: 24px;
    padding: 12px 0 7px;
    border-right: 1px solid #2b2b2b;
}

.act {
    width: 24px;
    height: 24px;
    flex: none;
    color: #858585;
    margin-right: 8px;
}

.act.active {
    color: #d7d7d7;
}

.act-spacer {
    flex: 1;
}

.sidebar {
    width: 468px;
    flex: none;
    display: flex;
    flex-direction: column;
    border-right: 1px solid #2b2b2b;
    overflow: hidden;
}

.side-title {
    height: 35px;
    flex: none;
    display: flex;
    align-items: center;
    justify-content: space-between;
    padding: 0 12px 0 20px;
    font-size: 11px;
    color: #bbb;
}

.more {
    font-weight: 700;
    color: #ccc;
    font-size: 13px;
    letter-spacing: 1.5px;
}

.folder-head {
    height: 22px;
    flex: none;
    display: flex;
    align-items: center;
    font-size: 11px;
    font-weight: 700;
    color: #ccc;
    box-shadow: 0 1px 3px #000;
    position: relative;
}

.chev-d {
    width: 11px;
    height: 8px;
    margin: 0 4px 0 5px;
    color: #ccc;
}

.tree {
    height: 876px;
    flex: none;
    overflow: hidden;
    margin-top: -4px;
}

.tree-row {
    height: 22px;
    display: flex;
    align-items: center;
    white-space: nowrap;
    color: #ccc;
}

.lvl1 { padding-left: 16px; }
.lvl2 { padding-left: 24px; }
.lvl3 { padding-left: 40px; }
.lvl-lime { padding-left: 34px; }

.t-img { width: 13px; height: 12px; margin-right: 5px; flex: none; }
.t-bmp { width: 10px; height: 10px; margin: 0 5px 0 3px; flex: none; }
.t-chev { width: 7px; height: 11px; margin: 0 7px 0 4px; flex: none; color: #ccc; }
.t-chev-d { width: 10px; height: 7px; margin: 0 6px 0 0; flex: none; color: #ccc; }
.t-file { width: 12px; height: 12px; margin-right: 6px; flex: none; }

.selected {
    background: #37373d;
}

.side-section {
    height: 22px;
    flex: none;
    display: flex;
    align-items: center;
    border-top: 1px solid #2b2b2b;
    font-size: 11px;
    font-weight: 700;
    color: #ccc;
}

.tree + .side-section {
    margin-top: 26px;
}

.side-section .t-chev {
    margin: 0 8px 0 6px;
}

/* editor */
.main {
    flex: 1;
    min-width: 0;
    display: flex;
    flex-direction: column;
}

.tabbar {
    height: 35px;
    flex: none;
    display: flex;
    border-bottom: 1px solid #2b2b2b;
}

.tab {
    display: flex;
    align-items: center;
    height: 35px;
    flex: none;
    border-right: 1px solid #2b2b2b;
    font-size: 12.5px;
    color: #9d9d9d;
    overflow: hidden;
    white-space: nowrap;
}

.tab-welcome {
    width: 86px;
    justify-content: flex-end;
    padding-right: 32px;
}

.tab-lowlight {
    width: 150px;
    padding-left: 15px;
}

.tab-active {
    width: 120px;
    padding-left: 15px;
    background: #1f1f1f;
    border-top: 1px solid #0078d4;
    color: #fff;
    position: relative;
}

.tab-close {
    position: absolute;
    left: 100px;
    top: 12px;
    color: #eee;
}

.tab-actions {
    flex: 1;
    display: flex;
    align-items: center;
    padding-left: 10px;
    color: #ccc;
}

.ico-run { width: 12px; height: 14px; color: #ccc; }
.ico-chev { width: 8px; height: 6px; color: #ccc; margin-left: 7px; }
.tab-actions .ico-15 { margin-left: 13px; }
.tab-actions .more { margin-left: 11px; }

.breadcrumb {
    height: 22px;
    flex: none;
    display: flex;
    align-items: center;
    padding-left: 22px;
    background: #1f1f1f;
    color: #a9a9a9;
    box-shadow: 0 1px 3px #000;
    position: relative;
}

.crumb-chev {
    width: 6px;
    height: 11px;
    margin: 0 5px 0 7px;
    color: #aaa;
}

.editor {
    height: 364px;
    flex: none;
    display: flex;
    background: #1f1f1f;
    padding-top: 2px;
    overflow: hidden;
    font-family: "DejaVu Sans Mono", monospace;
    font-size: 13px;
    letter-spacing: -0.226px;
}

.gutter {
    width: 43px;
    flex: none;
    text-align: right;
    color: #6e7681;
    line-height: 19px;
}

.gutter .cur {
    color: #ccc;
}

.code {
    width: 326px;
    margin-left: 26px;
    flex: none;
    overflow: hidden;
    color: #d4d4d4;
}

.ln {
    height: 19px;
    line-height: 19px;
    white-space: pre;
}

.cur-line {
    box-shadow: inset 0 1px 0 #2a2a2a, inset 0 -1px 0 #2a2a2a;
}

.guide {
    border-left: 1px solid #6a6a6a;
}

.ln i {
    font-style: normal;
}

.ln b,
.terminal b {
    font-family: "Noto Sans CJK SC", sans-serif;
    font-weight: 400;
    letter-spacing: 0;
}

.ln b {
    font-size: 15px;
}

.ln .v { color: #4fb5ee; }
.ln .u { color: #4fc1ff; }
.ln .c { color: #4ec9b0; }
.ln .f { color: #dcdcaa; }
.ln .k { color: #c586c0; }
.ln .s { color: #ce9178; }
.ln .n { color: #b5cea8; }
.ln .m { color: #6a9955; }
.ln .b1 { color: #ffd700; }
.ln .b2 { color: #da70d6; }
.ln .b3 { color: #179fff; }

.minimap {
    margin-left: 8px;
    flex: none;
    opacity: 0.7;
}

.editor-scroll {
    flex: 1;
    border-left: 1px solid #333;
    position: relative;
}

.scroll-mark {
    position: absolute;
    left: 0;
    right: 0;
    top: 48px;
    height: 2px;
    background: #777;
}

/* terminal */
.panel {
    flex: 1;
    border-top: 1px solid #2b2b2b;
    min-height: 0;
}

.panel-head {
    height: 32px;
    display: flex;
    align-items: flex-start;
    padding: 9px 11px 0 20px;
    font-size: 10.5px;
}

.panel-tab {
    height: 22px;
    padding: 0 2px;
    margin-right: 20px;
    color: #9d9d9d;
}

.panel-tab.on {
    color: #ccc;
    border-bottom: 1px solid #0078d4;
    margin-right: 18px;
}

.panel-actions {
    margin-left: auto;
    display: flex;
    align-items: center;
    color: #ccc;
}

.term-name {
    font-size: 11px;
    letter-spacing: -0.3px;
    margin: 0 11px 0 6px;
}

.term-plus {
    width: 13px;
    height: 13px;
    background: linear-gradient(#ccc, #ccc) center/13px 1px no-repeat, linear-gradient(#ccc, #ccc) center/1px 13px no-repeat;
}

.panel-actions .ico-15 { margin-left: 11px; }
.panel-actions .ico-15:first-child { margin-left: 0; }
.ico-trash { width: 11px; height: 13px; color: #ccc; margin-left: 12px; }
.panel-actions .more { margin-left: 12.5px; }
.ico-up { width: 11px; height: 7px; color: #ccc; margin-left: 12.5px; transform: rotate(180deg); }
.panel-actions .ico-10 { margin-left: 16px; }

.terminal {
    padding: 17px 0 0 20px;
    font-family: "DejaVu Sans Mono", monospace;
    font-size: 12px;
    letter-spacing: -0.224px;
    line-height: 17px;
    color: #ccc;
}

.terminal > div {
    height: 17px;
    white-space: pre;
}

.terminal b {
    font-size: 13.5px;
}

.py {
    color: #f5f543;
}

.terminal .term-cursor {
    width: 7px;
    height: 16px;
    border: 1px solid #ccc;
}

/* task manager */
.taskmgr {
    width: 945px;
    height: 1021px;
    flex: none;
    display: flex;
    flex-direction: column;
    background: #fff;
    border-top: 1px solid #707070;
    border-left: 1px solid #333;
    font-family: "Open Sans", "Noto Sans CJK SC", sans-serif;
    font-size: 12px;
    color: #222;
    position: relative;
}

.p-ico {
    width: 16px;
    height: 16px;
    flex: none;
}

.p-ico.vs {
    color: #0a78d4;
}

.tm-title {
    height: 29px;
    flex: none;
    display: flex;
    align-items: center;
    padding-left: 8px;
}

.tm-name {
    margin-left: 5px;
    color: #333;
}

.tm-win {
    margin-left: auto;
    display: flex;
    align-items: center;
    gap: 35px;
    padding-right: 4px;
}

.tm-win .ico-11 {
    color: #222;
}

.tm-min {
    width: 10px;
    height: 1px;
    background: #222;
}

.tm-max {
    width: 10px;
    height: 10px;
    border: 1px solid #222;
}

.tm-menu {
    height: 21px;
    flex: none;
    display: flex;
    gap: 14px;
    padding: 2px 0 0 7px;
    border-bottom: 2px solid #f0f0f0;
    line-height: 18px;
}

.tm-tabs {
    height: 27px;
    flex: none;
    display: flex;
    align-items: flex-end;
    border-bottom: 1px solid #d9d9d9;
}

.tm-tab {
    height: 23px;
    padding: 0 5.5px;
    background: #f0f0f0;
    border: 1px solid #d9d9d9;
    border-bottom: none;
    margin-right: -1px;
    line-height: 23px;
    color: #333;
}

.tm-tab:nth-child(2) {
    padding: 0 4.5px;
}

.tm-tab.on {
    height: 26px;
    margin: 0 0 -1px 0;
    padding: 0 7px;
    background: #fff;
    line-height: 24px;
    border-left: none;
    color: #222;
}

.tm-head {
    display: grid;
    grid-template-columns: 234px 120px 73px 73px 73px 73px 73px 200px 25px;
    height: 44px;
    margin-top: 13px;
    flex: none;
    border-bottom: 1px solid #a0a0a0;
}

.th {
    position: relative;
    display: flex;
    flex-direction: column;
    justify-content: flex-end;
    align-items: flex-end;
    padding: 0 7px 4px;
    border-right: 1px solid #d9d9d9;
    font-size: 12px;
    line-height: 17px;
    color: #4c607a;
    white-space: nowrap;
    overflow: hidden;
}

.th.left {
    align-items: flex-start;
}

.th:last-child {
    border-right: none;
}

.th strong {
    font-weight: 400;
    font-size: 16px;
    line-height: 22px;
    color: #333;
}

.sort-chev {
    position: absolute;
    left: 9px;
    top: 5px;
    width: 8px;
    height: 5px;
    color: #4c607a;
}

.tm-body {
    height: 838px;
    flex: none;
    display: flex;
    overflow: hidden;
}

.proc-list {
    width: 940px;
    flex: none;
}

.proc {
    display: grid;
    grid-template-columns: 234px 120px 73px 73px 73px 73px 73px 200px 21px;
    height: 28px;
    line-height: 28px;
    white-space: nowrap;
}

.name,
.eng {
    word-spacing: 1px;
    letter-spacing: 0.1px;
}

.name {
    display: flex;
    align-items: center;
    overflow: hidden;
}

.name .p-ico,
.typora {
    margin-right: 6px;
}

.no-exp {
    padding-left: 28px;
}

.exp {
    width: 7px;
    height: 11px;
    margin: 0 14px 0 7px;
    color: #8a8a8a;
    flex: none;
    stroke-width: 1.5;
}

.typora {
    width: 16px;
    height: 16px;
    flex: none;
    border: 1px solid #ddd;
    border-radius: 2px;
    font-family: "Liberation Serif", serif;
    font-size: 12px;
    font-weight: 700;
    line-height: 14px;
    text-align: center;
    color: #555;
}

.stat {
    display: flex;
    align-items: center;
    justify-content: flex-end;
    padding-right: 6px;
}

.leaf {
    width: 11px;
    height: 15px;
}

.h {
    background: #fff3c4;
    border-right: 1px solid #ead6a0;
    padding-right: 6px;
    text-align: right;
}

.proc .h:nth-child(3) {
    box-shadow: -1px 0 0 #ead6a0;
}

.h.m { background: #f9eaa8; }
.h.o { background: #ffa71f; }
.h.y { background: #fedd7b; }

.eng {
    padding-left: 7px;
}

.pw {
    background: #fff3c4;
    padding-left: 6px;
    overflow: hidden;
    box-shadow: -1px 0 0 #ead6a0;
}

.pw.m { background: #f9eaa8; }
.pw.r { background: #fc6a26; }
.pw.y { background: #fec95c; }

.hover .name,
.hover > div:nth-child(2),
.hover .eng {
    background: #e3f1fc;
}

.hover .h { background: #f0f3e6; }
.hover .h.m { background: #eaeedd; }
.hover .pw { background: #f0f3e6; }

.v-scroll {
    flex: 1;
    padding-top: 28px;
}

.v-thumb {
    display: block;
    height: 500px;
    background: #cdcdcd;
}

.h-scroll {
    height: 17px;
    flex: none;
    display: flex;
    background: #f0f0f0;
}

.h-btn {
    width: 17px;
    text-align: center;
    font-size: 15px;
    font-weight: 700;
    line-height: 14px;
    color: #555;
}

.h-thumb {
    width: 761px;
    background: #cdcdcd;
}

.h-track {
    flex: 1;
}

.tm-foot {
    flex: 1;
    display: flex;
    justify-content: space-between;
    align-items: flex-end;
    border-top: 1px solid #a0a0a0;
}

.less {
    display: flex;
    align-items: flex-start;
    gap: 8px;
    padding: 14px 0 0 8px;
    height: 30px;
    font-size: 13px;
    line-height: 19px;
    color: #222;
    overflow: hidden;
}

.less-ico {
    width: 18px;
    height: 18px;
    border: 1px solid #999;
    border-radius: 50%;
    display: flex;
    align-items: center;
    justify-content: center;
    flex: none;
}

.less-ico .ico-up {
    margin: 0;
    color: #777;
}

.end-task {
    width: 79px;
    height: 17px;
    background: #ccc;
    text-align: right;
    padding-right: 5px;
    font-size: 13.5px;
    line-height: 19px;
    color: #8a8a8a;
    white-space: nowrap;
    overflow: hidden;
}

.watermark {
    position: absolute;
    left: 842px;
    top: 1000px;
    font-family: "Liberation Sans", sans-serif;
    font-size: 11.5px;
    line-height: 14px;
    color: rgba(110, 110, 110, 0.8);
    white-space: nowrap;
}
```
